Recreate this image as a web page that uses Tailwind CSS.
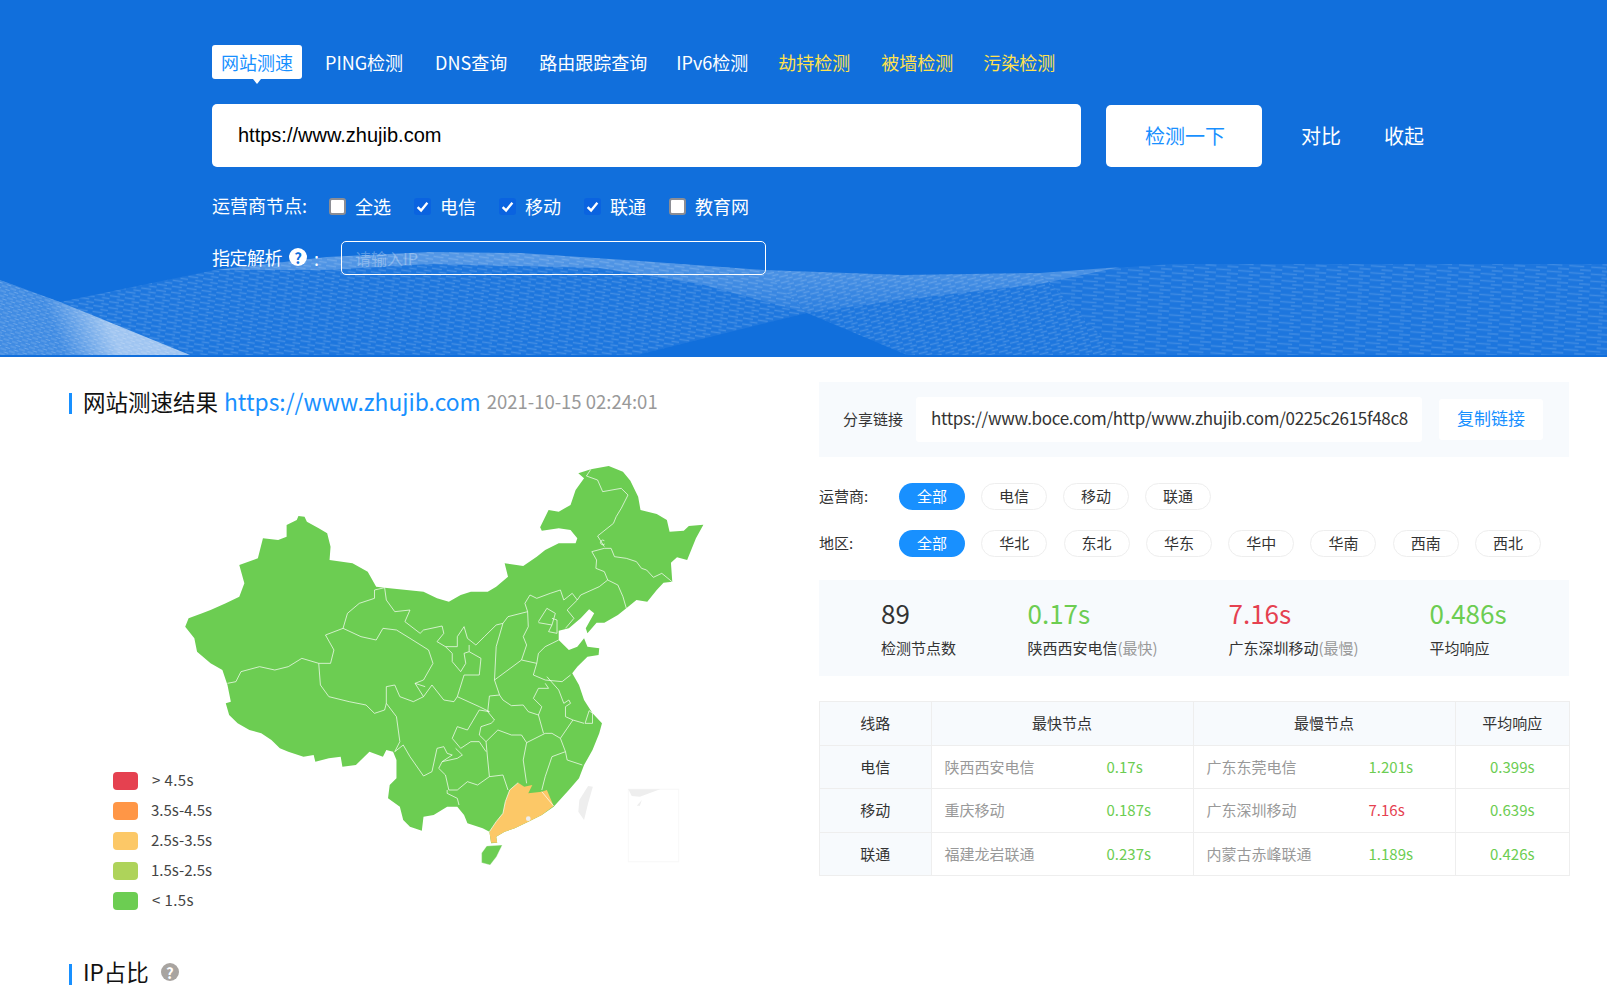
<!DOCTYPE html>
<html lang="zh-CN">
<head>
<meta charset="utf-8">
<title>网站测速</title>
<script src="https://cdn.jsdelivr.net/npm/@tailwindcss/browser@4"></script>
</head>
<body class="h-[991px] overflow-hidden bg-white text-[#333] font-['Noto_Sans_CJK_SC','Noto_Sans',sans-serif]">
<header class="relative h-[357px] overflow-hidden bg-[#116fdc] text-white">
  <svg class="absolute left-0 top-0 w-[1607px] h-[357px]" viewBox="0 0 1607 357" aria-hidden="true">
    <defs>
      <pattern id="ml" width="15" height="6" patternUnits="userSpaceOnUse" patternTransform="rotate(8)"><rect width="15" height="6" fill="#fff" fill-opacity=".05"/><path d="M0 1.5h10M7.5 4.5h10M-7.5 4.5h3" stroke="#fff" stroke-opacity=".17" stroke-width="1.5"/></pattern>
      <pattern id="mm" width="13" height="6" patternUnits="userSpaceOnUse" patternTransform="rotate(-14)"><rect width="13" height="6" fill="#fff" fill-opacity=".05"/><path d="M0 1.5h9M6.5 4.5h9M-6.5 4.5h2.5" stroke="#fff" stroke-opacity=".17" stroke-width="1.5"/></pattern>
      <pattern id="mr" width="22" height="7" patternUnits="userSpaceOnUse" patternTransform="rotate(4)"><rect width="22" height="7" fill="#fff" fill-opacity=".05"/><path d="M0 1.5h15M11 5h15M-11 5h4" stroke="#fff" stroke-opacity=".15" stroke-width="1.4"/></pattern>
      <pattern id="mc" width="9" height="5" patternUnits="userSpaceOnUse" patternTransform="rotate(18)"><path d="M0 1h6M4.5 3.5h6" stroke="#fff" stroke-opacity=".22" stroke-width="1.2"/></pattern>
      <linearGradient id="gc" gradientUnits="userSpaceOnUse" x1="110" y1="326" x2="60" y2="345"><stop offset="0" stop-color="#fff" stop-opacity=".6"/><stop offset="1" stop-color="#fff" stop-opacity=".2"/></linearGradient>
      <linearGradient id="gm" gradientUnits="userSpaceOnUse" x1="0" y1="258" x2="0" y2="320"><stop offset="0" stop-color="#fff" stop-opacity=".24"/><stop offset="1" stop-color="#fff" stop-opacity=".03"/></linearGradient>
    </defs>
    <path d="M60 302L215 270L327 257L430 252L520 253L640 261L763 270L807 313L637 355H190Z" fill="url(#ml)"/>
    <path d="M763 270L903 275L1040 273L1120 355H907L807 313Z" fill="url(#mm)"/>
    <path d="M1040 273L1173 264H1607V355H1120Z" fill="url(#mr)"/>
    <path d="M215 270L327 257L430 252L520 253L640 261L763 270L903 275L1040 273L1120 267L1040 284L900 300L807 313L700 284L600 268L430 264L327 270Z" fill="url(#gm)"/>
    <path d="M0 280L60 302L190 355H0Z" fill="url(#gc)"/>
    <path d="M0 280L60 302L190 355H0Z" fill="url(#mc)"/>
  </svg>
  <div class="relative pl-[212px] pt-[45px]">
    <nav class="flex items-center h-[34px] text-[18px]">
      <a class="relative flex items-center h-[34px] w-[90px] justify-center rounded-[3px] bg-white text-[#1890ff] after:absolute after:left-1/2 after:-bottom-[5px] after:-ml-[4px] after:border-x-[4px] after:border-t-[5px] after:border-x-transparent after:border-t-white">网站测速</a>
      <a class="ml-[23px]">PING检测</a>
      <a class="ml-[32px]">DNS查询</a>
      <a class="ml-[32px]">路由跟踪查询</a>
      <a class="ml-[29px]">IPv6检测</a>
      <a class="ml-[30px] text-[#ffe14d]">劫持检测</a>
      <a class="ml-[31px] text-[#ffe14d]">被墙检测</a>
      <a class="ml-[30px] text-[#ffe14d]">污染检测</a>
    </nav>
    <div class="flex items-center mt-[25px] h-[63px]">
      <div class="flex items-center w-[869px] h-[63px] pl-[26px] pb-[2px] rounded-[5px] bg-white text-[20px] text-black font-['Liberation_Sans',sans-serif]">https://www.zhujib.com</div>
      <button class="ml-[25px] w-[156px] h-[62px] pl-[2px] rounded-[5px] bg-white text-[20px] text-[#1890ff]">检测一下</button>
      <span class="ml-[39px] text-[20px]">对比</span>
      <span class="ml-[43px] text-[20px]">收起</span>
    </div>
    <div class="flex items-center mt-[26px] h-[26px] text-[18px]">
      <span class="w-[117px] -mt-[1px]">运营商节点:</span>
      <label class="flex items-center w-[85px]"><span class="w-[17px] h-[17px] rounded-[3px] border-2 border-[#8b8d94] bg-white"></span><span class="ml-[9px]">全选</span></label>
      <label class="flex items-center w-[85px]"><span class="flex items-center justify-center w-[17px] h-[17px] rounded-[3px] bg-[#0a63e0]"><svg class="w-[13px] h-[13px]" viewBox="0 0 12 12" fill="none" stroke="#fff" stroke-width="2.2"><path d="M1.5 6.5L4.7 9.6L10.5 2.6"/></svg></span><span class="ml-[9px]">电信</span></label>
      <label class="flex items-center w-[85px]"><span class="flex items-center justify-center w-[17px] h-[17px] rounded-[3px] bg-[#0a63e0]"><svg class="w-[13px] h-[13px]" viewBox="0 0 12 12" fill="none" stroke="#fff" stroke-width="2.2"><path d="M1.5 6.5L4.7 9.6L10.5 2.6"/></svg></span><span class="ml-[9px]">移动</span></label>
      <label class="flex items-center w-[85px]"><span class="flex items-center justify-center w-[17px] h-[17px] rounded-[3px] bg-[#0a63e0]"><svg class="w-[13px] h-[13px]" viewBox="0 0 12 12" fill="none" stroke="#fff" stroke-width="2.2"><path d="M1.5 6.5L4.7 9.6L10.5 2.6"/></svg></span><span class="ml-[9px]">联通</span></label>
      <label class="flex items-center"><span class="w-[17px] h-[17px] rounded-[3px] border-2 border-[#8b8d94] bg-white"></span><span class="ml-[9px]">教育网</span></label>
    </div>
    <div class="flex items-center mt-[22px] h-[34px] text-[18px]">
      <span class="w-[72px] -mt-[2px] tracking-[-0.5px]">指定解析</span>
      <span class="flex items-center justify-center ml-[5px] -mt-[2px] w-[18px] h-[18px] rounded-full bg-white text-[15px] leading-none font-bold text-[#116fdc]">?</span>
      <span class="ml-[7px] w-[27px]">:</span>
      <div class="flex items-center w-[425px] h-[34px] pl-[13px] pb-[1px] rounded-[5px] border border-white text-[16px] text-white/30">请输入IP</div>
    </div>
  </div>
</header>

<main class="flex">
  <section class="w-[819px] shrink-0 pl-[69px]">
    <h2 class="mt-[30px] flex items-center h-[30px] whitespace-nowrap text-[22.5px] font-normal text-[#111]">
      <span class="w-[3px] h-[21px] mt-[2px] bg-[#1890ff]"></span>
      <span class="ml-[11px]">网站测速结果</span>
      <span class="ml-[6px] text-[#1890ff] text-[22.8px]">https://www.zhujib.com</span>
      <span class="ml-[6px] text-[18.5px] text-[#999]">2021-10-15 02:24:01</span>
    </h2>
    <div class="relative mt-[23px] ml-[101px] w-[530px] h-[440px]">
      <svg class="w-[530px] h-[440px] overflow-visible" viewBox="0 0 1568 1320" preserveAspectRatio="none" aria-label="中国地图">
        <path fill="#6ccd52" d="M1208 100L1245 88L1298 78L1340 95L1362 122L1385 170L1392 210L1440 222L1470 240L1478 275L1520 272L1535 258L1578 254L1556 295L1530 360L1500 352L1482 368L1486 425L1460 428L1440 450L1412 485L1380 480L1350 505L1325 525L1285 548L1262 548L1235 580L1230 565L1255 520L1240 508L1215 535L1180 565L1150 572L1150 600L1180 630L1205 620L1225 595L1235 620L1270 625L1268 645L1235 650L1205 680L1190 700L1210 735L1225 780L1250 820L1278 850L1270 880L1250 930L1225 975L1210 1015L1180 1050L1135 1100L1100 1125L1060 1145L1020 1165L990 1175L965 1190L968 1208L950 1210L945 1175L925 1165L880 1150L870 1125L850 1100L820 1100L780 1125L750 1130L745 1172L710 1160L690 1140L680 1100L645 1075L650 1035L670 1015L670 960L660 935L640 930L630 950L590 935L550 975L510 980L505 950L470 955L430 965L425 945L395 950L350 935L325 925L300 900L270 880L235 870L200 850L175 825L165 790L180 785L170 735L155 690L120 670L80 635L72 595L45 560L55 535L95 520L120 510L165 490L205 470L220 430L205 375L260 355L275 295L320 300L345 290L345 255L375 240L380 228L398 230L405 245L440 265L465 280L475 320L472 360L540 370L585 395L610 440L635 443L700 450L750 455L790 475L825 485L860 465L890 455L940 455L965 440L1000 410L990 370L1045 378L1085 350L1110 330L1150 310L1200 310L1205 295L1185 270L1150 265L1100 272L1095 262L1120 210L1150 215L1185 195L1200 150L1225 115Z"/>
        <path fill="#6ccd52" stroke="#fff" stroke-width="1" d="M922 1239L937 1218L983 1215L966 1250L947 1275L922 1268Z"/>
        <path fill="#fcc867" d="M1030 1028L1048 1040L1072 1035L1060 1060L1100 1055L1115 1050L1135 1098L1100 1125L1060 1145L1020 1165L990 1175L965 1190L968 1208L950 1208L945 1175L965 1145L985 1120L992 1085L1005 1050Z"/>
        <circle cx="1060" cy="1136" r="7" fill="#eee"/>
        <g fill="none" stroke="#fff" stroke-opacity=".8" stroke-width="2.6" stroke-linejoin="round">
          <path d="M1245 88L1232 108L1265 120L1280 155L1335 145L1355 165L1335 205L1320 230L1312 250L1265 288L1285 320"/>
          <path d="M1285 302a7 7 0 1 0 1 10"/>
          <path d="M1285 325L1248 335L1262 360L1260 385L1285 395L1295 420L1270 440L1215 465L1205 480L1190 460L1165 480L1155 450L1125 460L1085 475L1065 465L1050 490L1058 515L1000 530L985 550L965 620L960 720L1040 660L1085 670L1090 640L1110 620L1150 600"/>
          <path d="M1285 325L1305 325L1315 350L1350 355L1380 365L1395 385L1410 390L1430 412L1455 400L1485 425"/>
          <path d="M1295 420L1325 435L1340 470L1350 505"/>
          <path d="M1205 480L1175 510L1195 535L1170 565"/>
          <path d="M1058 515L1060 560L1045 590L1055 615L1040 660"/>
          <path d="M1090 545L1115 505L1140 520L1130 555L1090 548M1130 535L1145 540L1145 580L1120 575L1130 555"/>
          <path d="M1085 670L1075 705L1110 720L1160 725L1185 705"/>
          <path d="M1115 710L1150 750L1165 790L1180 780L1185 790L1170 800L1170 830L1192 840L1225 850"/>
          <path d="M1110 730L1120 745L1090 745L1075 775L1100 800L1090 825L1060 815L1045 795L1010 797L985 780L975 765L960 720"/>
          <path d="M975 765L945 768L940 815L960 840L950 850L920 860L915 885L935 905L970 870L1010 885L1040 885L1055 908L1110 880L1130 880L1155 895L1192 840"/>
          <path d="M1090 825L1105 880"/>
          <path d="M1155 895L1170 935L1130 950L1110 1010L1100 1050"/>
          <path d="M1170 935L1175 960L1220 975"/>
          <path d="M1228 850L1240 812L1250 820L1250 850Z"/>
          <path d="M1055 908L1045 960L1055 1030"/>
          <path d="M1000 1050L985 1005L945 1010L940 960L935 905"/>
          <path d="M915 810L880 870L850 860L835 895L860 925L890 905L915 905L935 935"/>
          <path d="M915 810L945 815"/>
          <path d="M845 925L865 945L850 955L805 965L795 985L815 1005L825 1050L850 1050L880 1025L910 1035L945 1010"/>
          <path d="M680 905L665 935L690 915L710 950L750 1008L775 995L790 925L810 920L820 940L835 945L805 965"/>
          <path d="M640 790L670 830L680 905"/>
          <path d="M440 670L445 735L470 770L530 785L580 795L605 820L635 810L640 790L640 740L665 735L680 770L720 785L750 770L725 730L755 740"/>
          <path d="M750 770L775 735L810 780L840 785L850 770L915 800L945 815"/>
          <path d="M850 770L870 705L915 705L920 655L885 635L870 640L875 670L860 695L835 665L835 640L815 620L790 605L810 580L805 558L750 570L740 580L695 545L710 510L665 515L640 480L635 443"/>
          <path d="M815 620L850 620L850 590L870 560L880 595L905 615L930 590L965 555L985 550"/>
          <path d="M885 615L885 635"/>
          <path d="M635 443L605 450L605 475L560 490L525 520L512 565L460 585L485 630L475 670L440 670L390 655L350 680L310 690L265 680L210 695L195 725L170 730"/>
          <path d="M512 565L565 590L610 600L630 565L670 570L710 595L765 630L778 670L750 720L725 730"/>
          <path d="M820 1050L820 1060L850 1075L855 1095"/>
          <path d="M1030 1028L1005 1050L992 1085L985 1120L965 1145L945 1175M1100 1055L1135 1098"/>
        </g>
        <path fill="#eee" d="M1237 1038L1251 1040L1237 1090L1225 1140L1208 1115L1211 1080Z"/>
        <path fill="none" stroke="#f8f8f8" stroke-width="3" d="M1356 1048H1505V1265H1356Z"/>
        <path fill="#eee" d="M1356 1048H1450L1390 1070L1366 1068ZM1381 1097L1396 1080L1390 1097Z"/>
      </svg>
      <ul class="absolute left-[-57px] top-[332px] flex flex-col gap-[12px] text-[15px] text-[#444]">
        <li class="flex items-center h-[18px]"><span class="w-[25px] h-[18px] rounded-[4px] bg-[#e54150]"></span><span class="ml-[13px] -mt-[1px] w-[62px] pl-[1px] tracking-[0.4px] whitespace-pre">&gt; 4.5s</span></li>
        <li class="flex items-center h-[18px]"><span class="w-[25px] h-[18px] rounded-[4px] bg-[#ff9646]"></span><span class="ml-[13px] -mt-[1px] w-[62px] whitespace-nowrap">3.5s-4.5s</span></li>
        <li class="flex items-center h-[18px]"><span class="w-[25px] h-[18px] rounded-[4px] bg-[#fcc867]"></span><span class="ml-[13px] -mt-[1px] w-[62px] whitespace-nowrap">2.5s-3.5s</span></li>
        <li class="flex items-center h-[18px]"><span class="w-[25px] h-[18px] rounded-[4px] bg-[#aed35a]"></span><span class="ml-[13px] -mt-[1px] w-[62px] whitespace-nowrap">1.5s-2.5s</span></li>
        <li class="flex items-center h-[18px]"><span class="w-[25px] h-[18px] rounded-[4px] bg-[#6ccd52]"></span><span class="ml-[13px] -mt-[1px] w-[62px] pl-[1px] tracking-[0.4px] whitespace-pre">&lt; 1.5s</span></li>
      </ul>
    </div>
    <h2 class="mt-[79px] flex items-center h-[30px] text-[22.5px] font-normal text-[#111]">
      <span class="w-[3px] h-[21px] bg-[#1890ff]"></span>
      <span class="ml-[11px] -mt-[4px]">IP占比</span>
      <span class="flex items-center justify-center ml-[12px] -mt-[4px] w-[18px] h-[18px] rounded-full bg-[#a8a4a0] text-[15px] leading-none font-bold text-white">?</span>
    </h2>
  </section>

  <section class="w-[750px] shrink-0 pt-[25px]">
    <div class="flex items-center h-[75px] bg-[#f7fafd]">
      <span class="ml-[24px] w-[73px] text-[15px]">分享链接</span>
      <div class="flex items-center w-[506px] h-[45px] pl-[15px] pr-[12px] pb-[3px] rounded-[3px] bg-white text-[17px] tracking-[-0.3px]"><span class="block w-full overflow-hidden whitespace-nowrap">https://www.boce.com/http/www.zhujib.com/0225c2615f48c8</span></div>
      <button class="ml-[17px] w-[104px] h-[41px] pb-[3px] rounded-[3px] bg-white text-[17px] text-[#1890ff]">复制链接</button>
    </div>
    <div class="flex items-center mt-[26px] h-[27px] text-[15px]">
      <span class="w-[80px]">运营商:</span>
      <div class="flex gap-[16px]">
        <span class="flex items-center justify-center w-[66px] h-[27px] rounded-full bg-[#1890ff] text-white">全部</span>
        <span class="flex items-center justify-center w-[66px] h-[27px] rounded-full border border-[#eee]">电信</span>
        <span class="flex items-center justify-center w-[66px] h-[27px] rounded-full border border-[#eee]">移动</span>
        <span class="flex items-center justify-center w-[66px] h-[27px] rounded-full border border-[#eee]">联通</span>
      </div>
    </div>
    <div class="flex items-center mt-[20px] h-[27px] text-[15px]">
      <span class="w-[80px]">地区:</span>
      <div class="flex gap-[16.3px]">
        <span class="flex items-center justify-center w-[66px] h-[27px] rounded-full bg-[#1890ff] text-white">全部</span>
        <span class="flex items-center justify-center w-[66px] h-[27px] rounded-full border border-[#eee]">华北</span>
        <span class="flex items-center justify-center w-[66px] h-[27px] rounded-full border border-[#eee]">东北</span>
        <span class="flex items-center justify-center w-[66px] h-[27px] rounded-full border border-[#eee]">华东</span>
        <span class="flex items-center justify-center w-[66px] h-[27px] rounded-full border border-[#eee]">华中</span>
        <span class="flex items-center justify-center w-[66px] h-[27px] rounded-full border border-[#eee]">华南</span>
        <span class="flex items-center justify-center w-[66px] h-[27px] rounded-full border border-[#eee]">西南</span>
        <span class="flex items-center justify-center w-[66px] h-[27px] rounded-full border border-[#eee]">西北</span>
      </div>
    </div>
    <div class="flex items-center mt-[23px] h-[96px] pl-[62px] bg-[#f7fafd] text-[15px] whitespace-nowrap">
      <div class="w-[146.5px]"><div class="-mt-[3px] text-[26px] leading-[38px]">89</div><div class="mt-[4px] leading-[24px]">检测节点数</div></div>
      <div class="w-[201px]"><div class="-mt-[3px] text-[26px] leading-[38px] text-[#6ccd52]">0.17s</div><div class="mt-[4px] leading-[24px]">陕西西安电信<span class="text-[#999]">(最快)</span></div></div>
      <div class="w-[201px]"><div class="-mt-[3px] text-[26px] leading-[38px] text-[#e54150]">7.16s</div><div class="mt-[4px] leading-[24px]">广东深圳移动<span class="text-[#999]">(最慢)</span></div></div>
      <div><div class="-mt-[3px] text-[26px] leading-[38px] text-[#6ccd52]">0.486s</div><div class="mt-[4px] leading-[24px]">平均响应</div></div>
    </div>
    <table class="mt-[25px] w-[750px] table-fixed border-collapse text-[15px]">
      <colgroup><col class="w-[111.5px]"><col class="w-[262px]"><col class="w-[262px]"><col class="w-[114.5px]"></colgroup>
      <thead>
        <tr class="h-[44px] bg-[#f7fafd]">
          <th class="border border-[#eee] font-normal">线路</th>
          <th class="border border-[#eee] font-normal">最快节点</th>
          <th class="border border-[#eee] font-normal">最慢节点</th>
          <th class="border border-[#eee] font-normal">平均响应</th>
        </tr>
      </thead>
      <tbody>
        <tr class="h-[43px]">
          <td class="border border-[#eee] bg-[#f7fafd] text-center">电信</td>
          <td class="border border-[#eee] pl-[13px]"><div class="flex"><span class="w-[162px] text-[#999]">陕西西安电信</span><span class="text-[#6ccd52]">0.17s</span></div></td>
          <td class="border border-[#eee] pl-[13px]"><div class="flex"><span class="w-[162px] text-[#999]">广东东莞电信</span><span class="text-[#6ccd52]">1.201s</span></div></td>
          <td class="border border-[#eee] text-center text-[#6ccd52]">0.399s</td>
        </tr>
        <tr class="h-[44px]">
          <td class="border border-[#eee] bg-[#f7fafd] text-center">移动</td>
          <td class="border border-[#eee] pl-[13px]"><div class="flex"><span class="w-[162px] text-[#999]">重庆移动</span><span class="text-[#6ccd52]">0.187s</span></div></td>
          <td class="border border-[#eee] pl-[13px]"><div class="flex"><span class="w-[162px] text-[#999]">广东深圳移动</span><span class="text-[#e54150]">7.16s</span></div></td>
          <td class="border border-[#eee] text-center text-[#6ccd52]">0.639s</td>
        </tr>
        <tr class="h-[43px]">
          <td class="border border-[#eee] bg-[#f7fafd] text-center">联通</td>
          <td class="border border-[#eee] pl-[13px]"><div class="flex"><span class="w-[162px] text-[#999]">福建龙岩联通</span><span class="text-[#6ccd52]">0.237s</span></div></td>
          <td class="border border-[#eee] pl-[13px]"><div class="flex"><span class="w-[162px] text-[#999]">内蒙古赤峰联通</span><span class="text-[#6ccd52]">1.189s</span></div></td>
          <td class="border border-[#eee] text-center text-[#6ccd52]">0.426s</td>
        </tr>
      </tbody>
    </table>
  </section>
</main>
</body>
</html>
